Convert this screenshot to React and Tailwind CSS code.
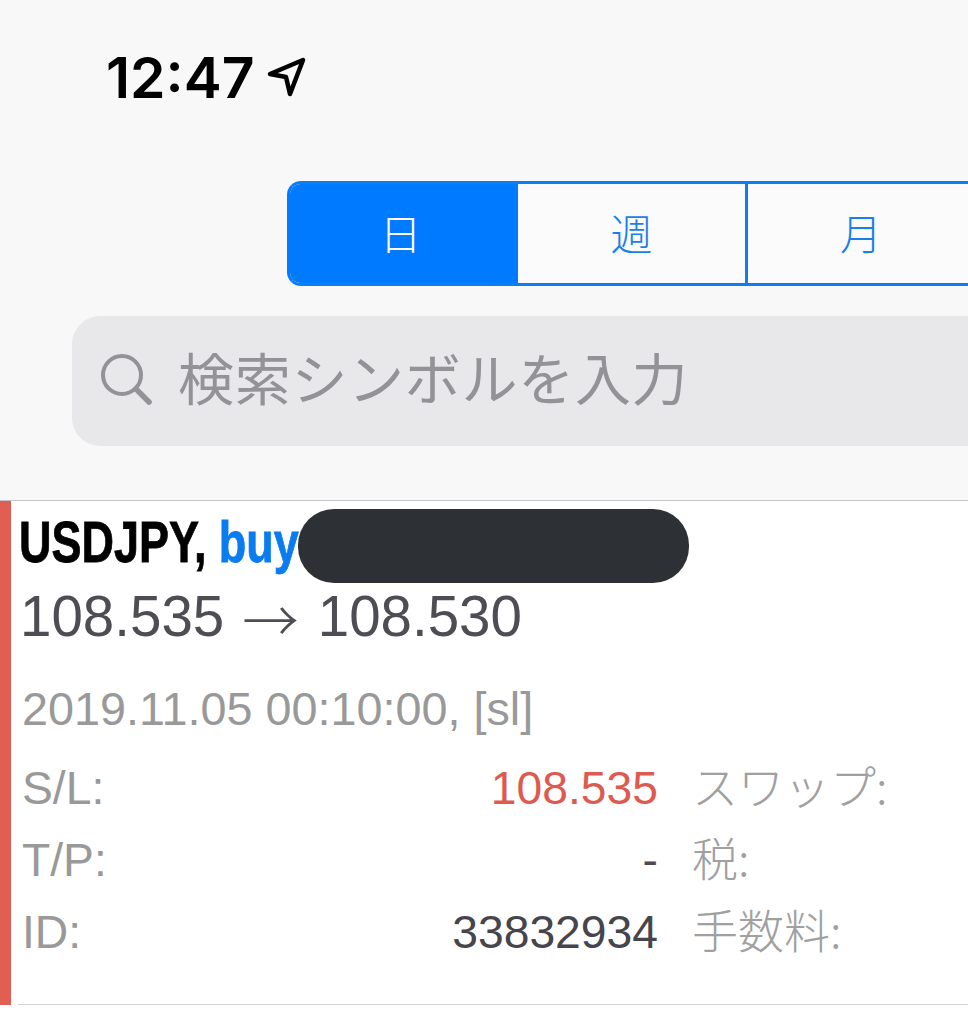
// Trade history screen (iOS photo crop)
const SANS = "font-['Liberation_Sans','Noto_Sans_CJK_JP',sans-serif]";

const ROWS = [
  { label: 'S/L:', value: '108.535', valueClass: 'text-[#dc5a50]', side: 'スワップ:' },
  { label: 'T/P:', value: '-', valueClass: 'text-[#4a4a50]', side: '税:' },
  { label: 'ID:', value: '33832934', valueClass: 'text-[#45454b]', side: '手数料:' },
];

const App = () => (
  <div className={`w-[968px] h-[1024px] overflow-hidden bg-[#f8f8f8] flex flex-col ${SANS}`}>
    {/* status bar */}
    <div className="h-[181px] shrink-0 pl-[106px] pt-[44px]">
      <div className="flex items-center gap-[11px] h-[66px]">
        <span className="font-['Inter',sans-serif] font-semibold text-[57px] leading-none text-black">12:47</span>
        <svg width="42" height="42" viewBox="0 0 42 42" fill="none" stroke="#000" strokeWidth="4.5" strokeLinejoin="round" strokeLinecap="round">
          <path d="M4 18 L37 4 L24 38 L20 21 Z" />
        </svg>
      </div>
    </div>

    {/* segmented control */}
    <div className="ml-[287px] w-[900px] h-[105px] shrink-0 flex border-[3px] border-[#0f7df2] border-l-[#007aff] rounded-l-[14px] overflow-hidden text-[42px] font-['Noto_Sans_CJK_JP',sans-serif] font-light">
      <div className="w-[228px] pr-[7px] pb-[5px] flex items-center justify-center bg-[#007aff] text-white">日</div>
      <div className="w-[230px] pb-[5px] flex items-center justify-center bg-[#fbfbfc] text-[#1a7fe8] border-r-[3px] border-[#0f7df2]">週</div>
      <div className="w-[226px] pb-[5px] flex items-center justify-center bg-[#fbfbfc] text-[#1a7fe8]">月</div>
    </div>

    {/* search */}
    <div className="ml-[72px] mt-[30px] w-[950px] h-[130px] shrink-0 rounded-l-[28px] bg-[#e8e8ea] flex items-center pl-[28px] gap-[24px] text-[#929297]">
      <svg width="54" height="54" viewBox="0 0 54 54" fill="none" stroke="#929297" strokeWidth="4" strokeLinecap="round">
        <circle cx="22" cy="21" r="19" />
        <path d="M36 35 L49 48" strokeWidth="5.5" />
      </svg>
      <span className="pb-[10px] font-['Noto_Sans_CJK_JP',sans-serif] font-normal text-[56px] leading-none tracking-[0.7px]">検索シンボルを入力</span>
    </div>

    {/* trade row */}
    <div className="mt-[54px] flex-1 bg-white border-t border-[#c4c4c6]">
      <div className="flex h-[504px]">
        <div className="w-[11px] bg-[#e05f52] shrink-0" />
        <div className="relative flex-1 ml-[7px] pl-[1px] border-b border-[#d4d4d6]">
          <div className="h-[82px] flex items-center">
            <div className="font-bold text-[58px] leading-none text-black whitespace-nowrap origin-left scale-x-[0.775] [-webkit-text-stroke:0.8px_currentColor]">
              USDJPY, <span className="text-[#0a7cf0]">buy</span>
            </div>
          </div>
          <div className="absolute left-[280px] top-[8px] w-[391px] h-[74px] rounded-[36px] bg-[#2d3135]" />
          <div className="pl-[1px] pt-[1px] flex items-center h-[68px] text-[56.5px] leading-none text-[#4d4d53] whitespace-nowrap">
            <span>108.535</span>
            <span className="ml-[18px] font-['Noto_Sans_CJK_JP',sans-serif] font-light">→</span>
            <span className="ml-[19px]">108.530</span>
          </div>
          <div className="pl-[3px] mt-[28px] text-[46.75px] leading-[60px] text-[#999999] whitespace-nowrap">2019.11.05 00:10:00, [sl]</div>
          <div className="mt-[13px] pl-[3px]">
            {ROWS.map((r) => (
              <div key={r.label} className="flex h-[72px] items-center text-[46.25px] leading-none">
                <span className="w-[110px] text-[#999999]">{r.label}</span>
                <span className={`w-[526px] text-right ${r.valueClass}`}>{r.value}</span>
                <span className="ml-[34px] pb-[8px] text-[#a0a0a0] text-[46px] font-['Noto_Sans_CJK_JP',sans-serif] font-light whitespace-nowrap">{r.side}</span>
              </div>
            ))}
          </div>
        </div>
      </div>
    </div>
  </div>
);

export default App;
